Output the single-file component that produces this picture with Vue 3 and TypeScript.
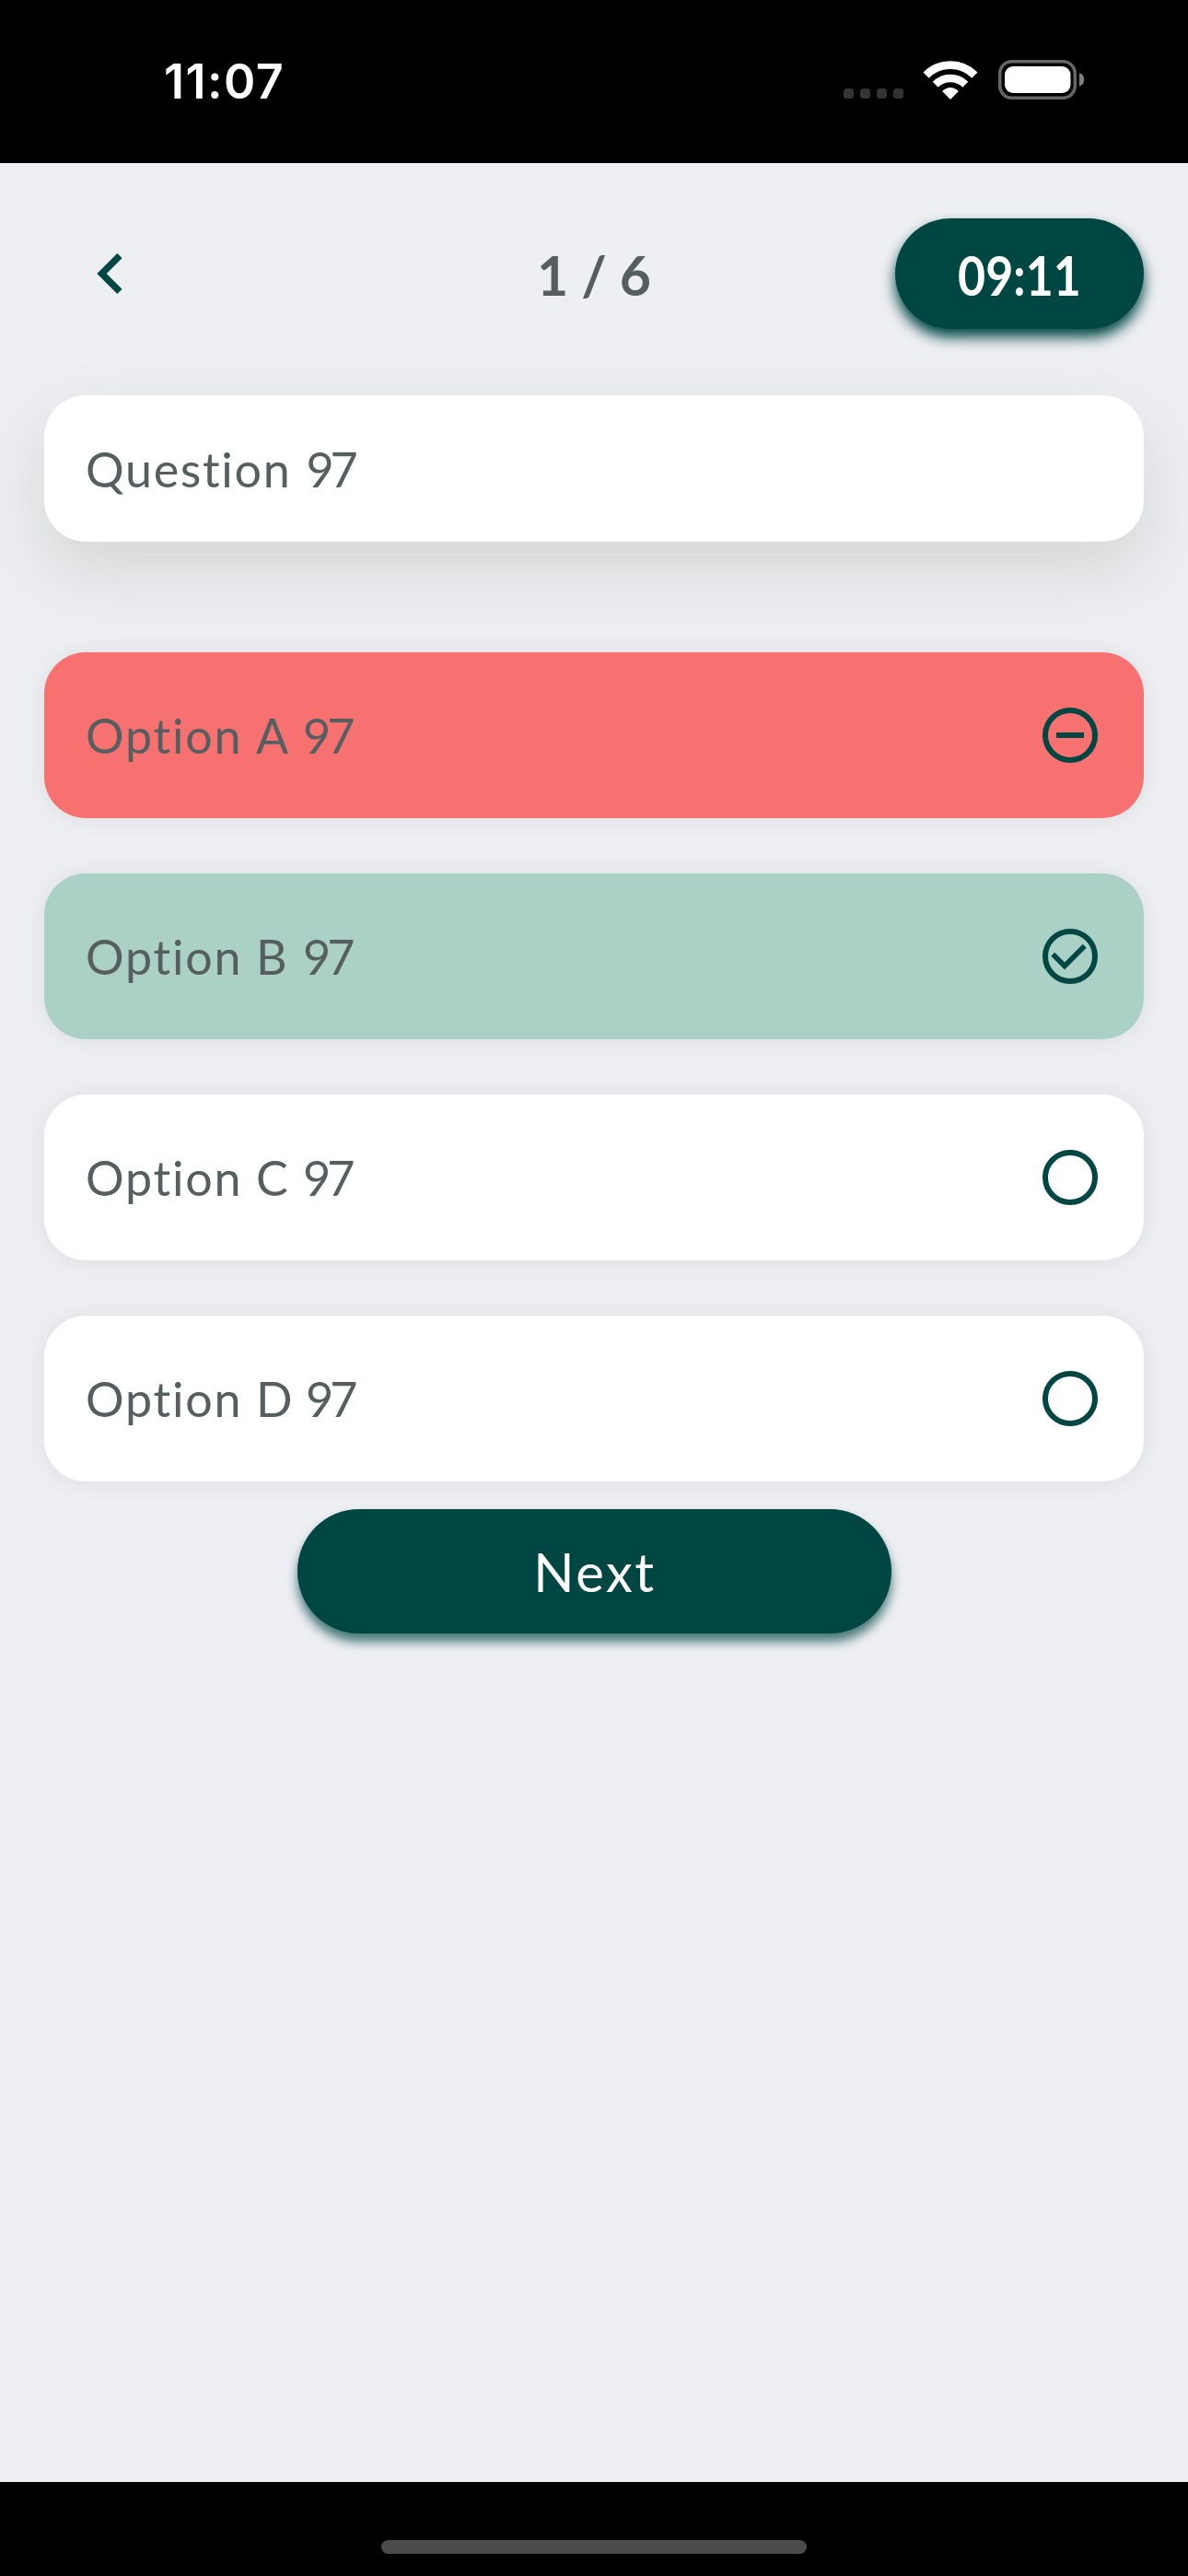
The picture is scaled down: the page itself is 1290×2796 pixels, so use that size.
<script setup lang="ts">
type OptionState = 'wrong' | 'correct' | 'idle'

interface QuizOption {
  id: string
  words: string[]
  state: OptionState
}

const options: QuizOption[] = [
  { id: 'a', words: ['Option', 'A', '97'], state: 'wrong' },
  { id: 'b', words: ['Option', 'B', '97'], state: 'correct' },
  { id: 'c', words: ['Option', 'C', '97'], state: 'idle' },
  { id: 'd', words: ['Option', 'D', '97'], state: 'idle' },
]
</script>

<template>
  <div class="screen">
    <header class="status">
      <span class="clock">11:07</span>
      <div class="indicators">
        <div class="dots"><i v-for="n in 4" :key="n"></i></div>
        <svg class="wifi" width="60" height="44" viewBox="0 0 60 44">
          <g fill="none" stroke="#fff">
            <path d="M3.6 16.6A37.3 37.3 0 0 1 56.4 16.6" stroke-width="8.8" />
            <path d="M13.7 26.7A23 23 0 0 1 46.3 26.7" stroke-width="8.4" />
          </g>
          <path d="M30 43L21.1 34.1Q30 26 38.9 34.1Z" fill="#fff" />
        </svg>
        <svg class="battery" width="94" height="43" viewBox="0 0 94 43">
          <rect x="1.75" y="1.75" width="81.5" height="39.5" rx="13" fill="none" stroke="#666" stroke-width="3.5" />
          <rect x="7" y="7" width="71.5" height="29" rx="9" fill="#fff" />
          <path d="M88 14.3a7.6 7.6 0 0 1 0 14.4z" fill="#808080" />
        </svg>
      </div>
    </header>

    <main class="content">
      <nav class="topbar">
        <button class="back" aria-label="Back">
          <svg width="88" height="88" viewBox="0 0 24 24">
            <path d="M15.41 7.41L14 6l-6 6 6 6 1.41-1.41L10.83 12z" fill="#004643" />
          </svg>
        </button>
        <div class="progress"><span>1</span><span>/</span><span>6</span></div>
        <div class="timer"><span class="time">09:11</span></div>
      </nav>

      <section class="question"><span class="q">Question</span> <span class="num">97</span></section>

      <ul class="options">
        <li v-for="option in options" :key="option.id" class="option" :class="[option.state, `row-${option.id}`]">
          <span class="label">
            <span class="word">{{ option.words[0] }}</span>
            <span class="letter">{{ option.words[1] }}</span>
            <span class="num">{{ option.words[2] }}</span>
          </span>
          <svg width="72" height="72" viewBox="0 0 24 24">
            <circle cx="12" cy="12" r="9" fill="none" stroke="#004643" stroke-width="2" />
            <path v-if="option.state === 'wrong'" d="M7 11h10v2H7z" fill="#004643" />
            <path
              v-else-if="option.state === 'correct'"
              d="M16.59 7.58L10 14.17l-3.59-3.58L5.1 11.9l4.9 4.9 7.9-7.9z"
              fill="#004643"
            />
          </svg>
        </li>
      </ul>

      <button class="next">Next</button>
    </main>

    <footer class="home"><div class="bar"></div></footer>
  </div>
</template>

<style>
body {
  margin: 0;
  background: #000;
}
</style>

<style scoped>
.screen {
  width: 1290px;
  height: 2796px;
  display: flex;
  flex-direction: column;
  overflow: hidden;
  background: #000;
  color: #575e60;
  font-family: Lato, 'Noto Sans', sans-serif;
}
button {
  border: 0;
  padding: 0;
  background: none;
  font-family: inherit;
}
svg {
  display: block;
  flex: none;
}
.status {
  box-sizing: border-box;
  height: 177px;
  flex: none;
  display: flex;
  justify-content: space-between;
  align-items: flex-start;
  padding: 64px 112px 0 178px;
  color: #fff;
}
.clock {
  padding-top: 1px;
  font: 600 52px/48px Inter, sans-serif;
  letter-spacing: 1.5px;
}
.indicators {
  display: flex;
  align-items: flex-start;
  padding-top: 1px;
}
.dots {
  display: flex;
  gap: 7px;
  padding-top: 31px;
}
.dots i {
  width: 11px;
  height: 11px;
  border-radius: 3.5px;
  background: #333;
}
.wifi {
  margin-left: 21px;
}
.battery {
  margin-left: 22px;
}
.content {
  flex: 1;
  display: flex;
  flex-direction: column;
  background: #eeeff3;
}
.topbar {
  display: grid;
  grid-template-columns: 270px 1fr 270px;
  align-items: center;
  height: 120px;
  margin: 60px 48px 0;
}
.back {
  width: 88px;
  margin-left: 28px;
}
.progress {
  display: flex;
  justify-content: center;
  align-items: center;
  gap: 14px;
  padding-top: 3px;
  font-size: 59px;
  font-weight: 700;
  line-height: 72px;
}
.timer {
  height: 120px;
  border-radius: 60px;
  background: #004643;
  box-shadow: 0 9px 15px #004643;
  color: #fff;
  text-align: center;
  font-size: 59px;
  font-weight: 700;
  line-height: 123px;
}
.time {
  display: inline-block;
  transform: scaleX(0.88);
}
.question {
  height: 159px;
  margin: 72px 48px 0;
  padding-left: 45px;
  display: flex;
  align-items: center;
  border-radius: 45px;
  background: #fff;
  box-shadow: 0 30px 70px rgba(90, 90, 68, 0.17);
  font-size: 52px;
}
.num {
  letter-spacing: -4px;
}
.question .num {
  margin-left: 16px;
}
.q {
  letter-spacing: 1.7px;
}
.options {
  list-style: none;
  margin: 120px 48px 0;
  padding: 0;
  display: flex;
  flex-direction: column;
  gap: 60px;
}
.option {
  height: 180px;
  padding: 0 44px 0 45px;
  display: flex;
  align-items: center;
  justify-content: space-between;
  border-radius: 45px;
  background: #fff;
  box-shadow: 0 1px 26px rgba(0, 0, 0, 0.075);
  font-size: 52px;
}
.option.wrong {
  background: #f87171;
}
.option.correct {
  background: #abd1c6;
}
.label {
  display: flex;
}
.word {
  width: 185px;
  letter-spacing: 1.8px;
}
.letter {
  width: 51px;
}
.row-d .letter {
  width: 54px;
}
.next {
  width: 645px;
  height: 135px;
  margin: 30px auto 0;
  border-radius: 67px;
  background: #004643;
  box-shadow: 0 9px 12px rgba(0, 70, 67, 0.7);
  color: #fff;
  font-size: 58px;
  line-height: 135px;
  letter-spacing: 2.5px;
  text-indent: 2px;
}
.home {
  height: 102px;
  flex: none;
}
.bar {
  width: 462px;
  height: 15px;
  margin: 63px auto 0;
  border-radius: 8px;
  background: #4b4b4b;
}
</style>
